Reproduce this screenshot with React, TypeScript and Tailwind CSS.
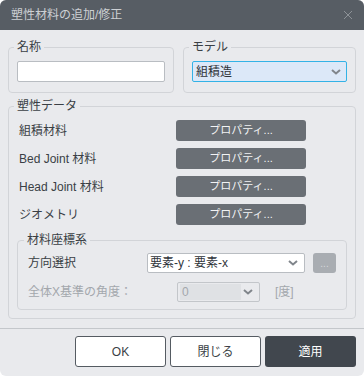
import React from "react";

const font = { fontFamily: '"Liberation Sans", "Noto Sans CJK JP", sans-serif' };

function Chevron({ className = "" }: { className?: string }) {
    return (
        <svg width="10" height="6" viewBox="0 0 10 6" className={className}>
            <polyline points="1,1 5,4.5 9,1" fill="none" stroke="currentColor" strokeWidth="2" />
        </svg>
    );
}

function PropButton() {
    return (
        <div className="w-[130px] h-[21px] rounded-[3px] bg-[#6a6f75] text-[11px] text-[#f2f3f4] flex items-center justify-center">
            プロパティ...
        </div>
    );
}

function PropRow({ label }: { label: string }) {
    return (
        <div className="flex items-center h-[21px] pl-[2px]">
            <span className="w-[157px] text-[12px] text-[#3a3f45]">{label}</span>
            <PropButton />
        </div>
    );
}

export default function App() {
    return (
        <div className="w-[364px] h-[376px] bg-white" style={font}>
            <div className="w-full h-full rounded-[6px] overflow-hidden bg-[#e9eaed] flex flex-col">
                <div className="h-[30px] bg-[#575d64] flex items-center justify-between pl-[11px] pr-[11px] shrink-0">
                    <span className="text-[12px] text-[#cdd0d4]">塑性材料の追加/修正</span>
                    <svg width="10" height="10" viewBox="0 0 10 10">
                        <path d="M1 1 L9 9 M9 1 L1 9" stroke="#8d9297" strokeWidth="1" />
                    </svg>
                </div>

                <div className="px-2 flex flex-col">
                    <div className="flex gap-[9px] mt-[9px]">
                        <fieldset className="w-[166px] border border-[#d2d4d8] rounded-[4px] px-2 pt-[6px] pb-[10px]">
                            <legend className="-ml-[3px] px-[3px] text-[12px] leading-4 text-[#3a3f45]">名称</legend>
                            <div className="h-[21px] bg-white border border-[#b9bdc2] rounded-[2px]" />
                        </fieldset>
                        <fieldset className="w-[173px] border border-[#d2d4d8] rounded-[4px] px-2 pt-[6px] pb-[10px]">
                            <legend className="-ml-[3px] px-[3px] text-[12px] leading-4 text-[#3a3f45]">モデル</legend>
                            <div className="h-[21px] bg-[#dce8f8] border border-[#33b2e6] rounded-[2px] flex items-center justify-between pl-[3px] pr-[5px]">
                                <span className="text-[12px] text-[#2f343a]">組積造</span>
                                <Chevron className="text-[#80858b]" />
                            </div>
                        </fieldset>
                    </div>

                    <fieldset className="mt-[5px] border border-[#d2d4d8] rounded-[4px] px-2 pt-[6px] pb-[8px]">
                        <legend className="-ml-[3px] px-[3px] text-[12px] leading-4 text-[#3a3f45]">塑性データ</legend>
                        <div className="flex flex-col gap-[7px]">
                            <PropRow label="組積材料" />
                            <PropRow label="Bed Joint 材料" />
                            <PropRow label="Head Joint 材料" />
                            <PropRow label="ジオメトリ" />
                        </div>

                        <fieldset className="mt-[7px] border border-[#d2d4d8] rounded-[4px] pl-[10px] pr-[10px] pt-[5px] pb-[7px]">
                            <legend className="-ml-[4px] px-[3px] text-[12px] leading-4 text-[#3a3f45]">材料座標系</legend>
                            <div className="flex items-center h-[20px]">
                                <span className="w-[119px] text-[12px] text-[#3a3f45]">方向選択</span>
                                <div className="w-[158px] h-[20px] bg-white border border-[#b9bdc2] rounded-[2px] flex items-center justify-between pl-[2px] pr-[6px]">
                                    <span className="text-[12px] text-[#2f343a]">要素-y : 要素-x</span>
                                    <Chevron className="text-[#80858b]" />
                                </div>
                                <div className="ml-[8px] w-[23px] h-[20px] rounded-[3px] bg-[#a9adb2] text-[10px] text-[#d5d8db] flex items-center justify-center">
                                    ...
                                </div>
                            </div>
                            <div className="flex items-center h-[20px] mt-[9px]">
                                <span className="w-[149px] text-[12px] text-[#a3a7ac]">全体X基準の角度：</span>
                                <div className="w-[83px] h-[20px] border border-[#c3c6ca] rounded-[2px] flex items-center justify-between pl-[2px] pr-[6px]">
                                    <span className="w-[61px] h-[16px] bg-[#dfe1e4] text-[12px] text-[#a3a7ac] leading-4 pl-[2px]">0</span>
                                    <Chevron className="text-[#80858b]" />
                                </div>
                                <span className="ml-[15px] text-[12px] text-[#a3a7ac]">[度]</span>
                            </div>
                        </fieldset>
                    </fieldset>
                </div>

                <div className="mt-[9px] border-t border-[#c4c7cb] flex justify-end gap-[4px] pr-2 pt-[7px]">
                    <div className="w-[91px] h-[31px] bg-white border border-[#555b62] rounded-[3px] flex items-center justify-center text-[12px] text-[#3a3f45]">OK</div>
                    <div className="w-[91px] h-[31px] bg-white border border-[#555b62] rounded-[3px] flex items-center justify-center text-[12px] text-[#3a3f45]">閉じる</div>
                    <div className="w-[91px] h-[31px] bg-[#41474e] rounded-[3px] flex items-center justify-center text-[12px] text-white">適用</div>
                </div>
            </div>
        </div>
    );
}
